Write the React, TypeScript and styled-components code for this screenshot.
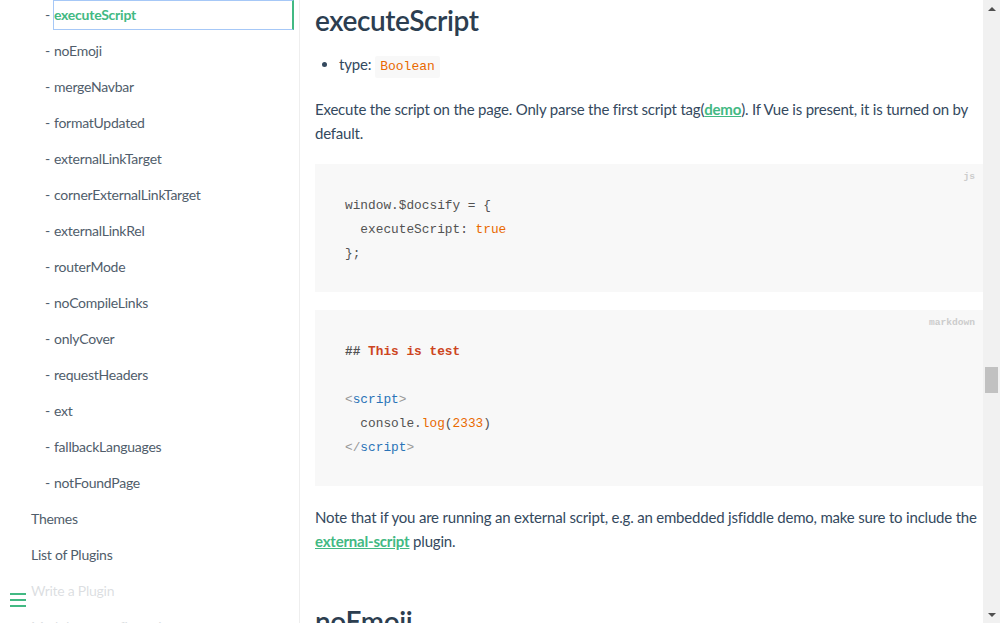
import React from "react";
import styled, { createGlobalStyle } from "styled-components";

const Global = createGlobalStyle`
  html, body { margin: 0; padding: 0; overflow: hidden; background: #fff; }
  body { font-family: Lato, "Noto Sans", sans-serif; -webkit-font-smoothing: antialiased; }
  * { box-sizing: border-box; }
`;

const Page = styled.div`
  display: flex;
  width: 1000px;
  height: 623px;
  overflow: hidden;
`;

const Sidebar = styled.nav`
  position: relative;
  width: 300px;
  flex: none;
  border-right: 1px solid #eee;
  overflow: hidden;
`;

const NavList = styled.ul`
  list-style: none;
  margin: 0;
  padding: 0;
  display: flex;
  flex-direction: column;
  gap: 6px;
`;

const NavItem = styled.li<{ $sub?: boolean }>`
  display: flex;
  align-items: center;
  height: 30px;
  padding-left: ${(p) => (p.$sub ? "45px" : "30px")};
  padding-right: 5px;
  font-size: 14px;
  letter-spacing: -0.25px;
  color: #505d6b;
  white-space: nowrap;
`;

const Dash = styled.span`
  width: 8px;
  flex: none;
  padding-bottom: 2px;
`;

const NavLink = styled.a<{ $active?: boolean }>`
  flex: 1;
  display: flex;
  align-items: center;
  height: 30px;
  padding: 0 0 2px 0;
  color: ${(p) => (p.$active ? "#42b983" : "#505d6b")};
  font-weight: ${(p) => (p.$active ? 700 : 400)};
  border: 1px solid ${(p) => (p.$active ? "#a6c8f7" : "transparent")};
  border-right: 2px solid ${(p) => (p.$active ? "#42b983" : "transparent")};
  text-decoration: none;
`;

const Toggle = styled.div`
  position: absolute;
  left: 0;
  bottom: 0;
  width: 284px;
  height: 44px;
  background: rgba(255, 255, 255, 0.8);
  padding: 14px 10px;
`;

const Burger = styled.div`
  width: 16px;
  display: flex;
  flex-direction: column;
  gap: 4px;
  span {
    display: block;
    height: 2px;
    background: #42b983;
  }
`;

const Main = styled.main`
  flex: 1;
  overflow: hidden;
  padding-left: 15px;
  color: #34495e;
  font-size: 15px;
  letter-spacing: -0.2px;
`;

const H2 = styled.h2`
  margin: 0;
  padding-top: 1px;
  font-size: 28px;
  line-height: 38px;
  font-weight: 600;
  color: #2c3e50;
  letter-spacing: -0.4px;
  white-space: nowrap;
`;

const Bullets = styled.ul`
  margin: 13px 0 0;
  padding-left: 24px;
  li { line-height: 24px; }
`;

const InlineCode = styled.code`
  display: inline-block;
  margin-left: 4px;
  padding: 0 5px;
  line-height: 22px;
  background: #f8f8f8;
  color: #e96900;
  border-radius: 2px;
  font-family: "Liberation Mono", monospace;
  font-size: 13px;
  letter-spacing: 0;
`;

const Para = styled.p<{ $top?: number }>`
  margin: ${(p) => p.$top ?? 20}px 0 0;
  line-height: 24px;
  white-space: nowrap;
`;

const Link = styled.a`
  color: #42b983;
  font-weight: 700;
  text-decoration: underline;
`;

const Pre = styled.pre<{ $top?: number }>`
  position: relative;
  margin: ${(p) => p.$top ?? 18}px 0 0;
  padding: 30px 30px 26px;
  background: #f8f8f8;
  font-family: "Liberation Mono", monospace;
  font-size: 12.8px;
  letter-spacing: 0;
  line-height: 24px;
  color: #525252;
`;

const Lang = styled.span`
  position: absolute;
  top: 5px;
  right: 8px;
  font-size: 9.6px;
  line-height: 15px;
  font-weight: 700;
  color: #ccc;
`;

const Tok = styled.span<{ $c: string; $b?: boolean }>`
  color: ${(p) => p.$c};
  font-weight: ${(p) => (p.$b ? 700 : 400)};
`;

const H2Next = styled(H2)`
  margin-top: 48px;
`;

const ScrollBar = styled.div`
  width: 17px;
  flex: none;
  background: #f1f1f1;
  display: flex;
  flex-direction: column;
  align-items: center;
`;

const Arrow = styled.div<{ $down?: boolean }>`
  height: 17px;
  width: 17px;
  display: flex;
  align-items: center;
  justify-content: center;
  &::before {
    content: "";
    border-left: 4px solid transparent;
    border-right: 4px solid transparent;
    ${(p) => (p.$down ? "border-top: 4px solid #505050;" : "border-bottom: 4px solid #505050;")}
  }
`;

const Track = styled.div`
  flex: 1;
  width: 100%;
  padding: 350px 2px 0;
`;

const Thumb = styled.div`
  height: 26px;
  background: #c1c1c1;
`;

const sub = [
  "executeScript",
  "noEmoji",
  "mergeNavbar",
  "formatUpdated",
  "externalLinkTarget",
  "cornerExternalLinkTarget",
  "externalLinkRel",
  "routerMode",
  "noCompileLinks",
  "onlyCover",
  "requestHeaders",
  "ext",
  "fallbackLanguages",
  "notFoundPage",
];
const top = ["Themes", "List of Plugins", "Write a Plugin", "Markdown configuration"];

export default function App() {
  return (
    <>
      <Global />
      <Page>
        <Sidebar>
          <NavList>
            {sub.map((s, i) => (
              <NavItem key={s} $sub>
                <Dash>-</Dash>
                <NavLink $active={i === 0}>{s}</NavLink>
              </NavItem>
            ))}
            {top.map((t) => (
              <NavItem key={t}>
                <NavLink>{t}</NavLink>
              </NavItem>
            ))}
          </NavList>
          <Toggle>
            <Burger>
              <span />
              <span />
              <span />
            </Burger>
          </Toggle>
        </Sidebar>
        <Main>
          <H2>executeScript</H2>
          <Bullets>
            <li>
              type:<InlineCode>Boolean</InlineCode>
            </li>
          </Bullets>
          <Para $top={19}>
            Execute the script on the page. Only parse the first script tag(<Link>demo</Link>). If Vue is present, it is turned on by
            <br />
            default.
          </Para>
          <Pre $top={19}>
            <Lang>js</Lang>
            {"window.$docsify = {\n  executeScript: "}
            <Tok $c="#e96900">true</Tok>
            {"\n};"}
          </Pre>
          <Pre>
            <Lang>markdown</Lang>
            <Tok $c="#525252" $b>## </Tok>
            <Tok $c="#cd4520" $b>This is test</Tok>
            {"\n\n"}
            <Tok $c="#999">&lt;</Tok>
            <Tok $c="#2973b7">script</Tok>
            <Tok $c="#999">&gt;</Tok>
            {"\n  console."}
            <Tok $c="#e96900">log</Tok>
            {"("}
            <Tok $c="#e96900">2333</Tok>
            {")\n"}
            <Tok $c="#999">&lt;/</Tok>
            <Tok $c="#2973b7">script</Tok>
            <Tok $c="#999">&gt;</Tok>
          </Pre>
          <Para $top={19}>
            Note that if you are running an external script, e.g. an embedded jsfiddle demo, make sure to include the
            <br />
            <Link>external-script</Link> plugin.
          </Para>
          <H2Next>noEmoji</H2Next>
        </Main>
        <ScrollBar>
          <Arrow />
          <Track>
            <Thumb />
          </Track>
          <Arrow $down />
        </ScrollBar>
      </Page>
    </>
  );
}
